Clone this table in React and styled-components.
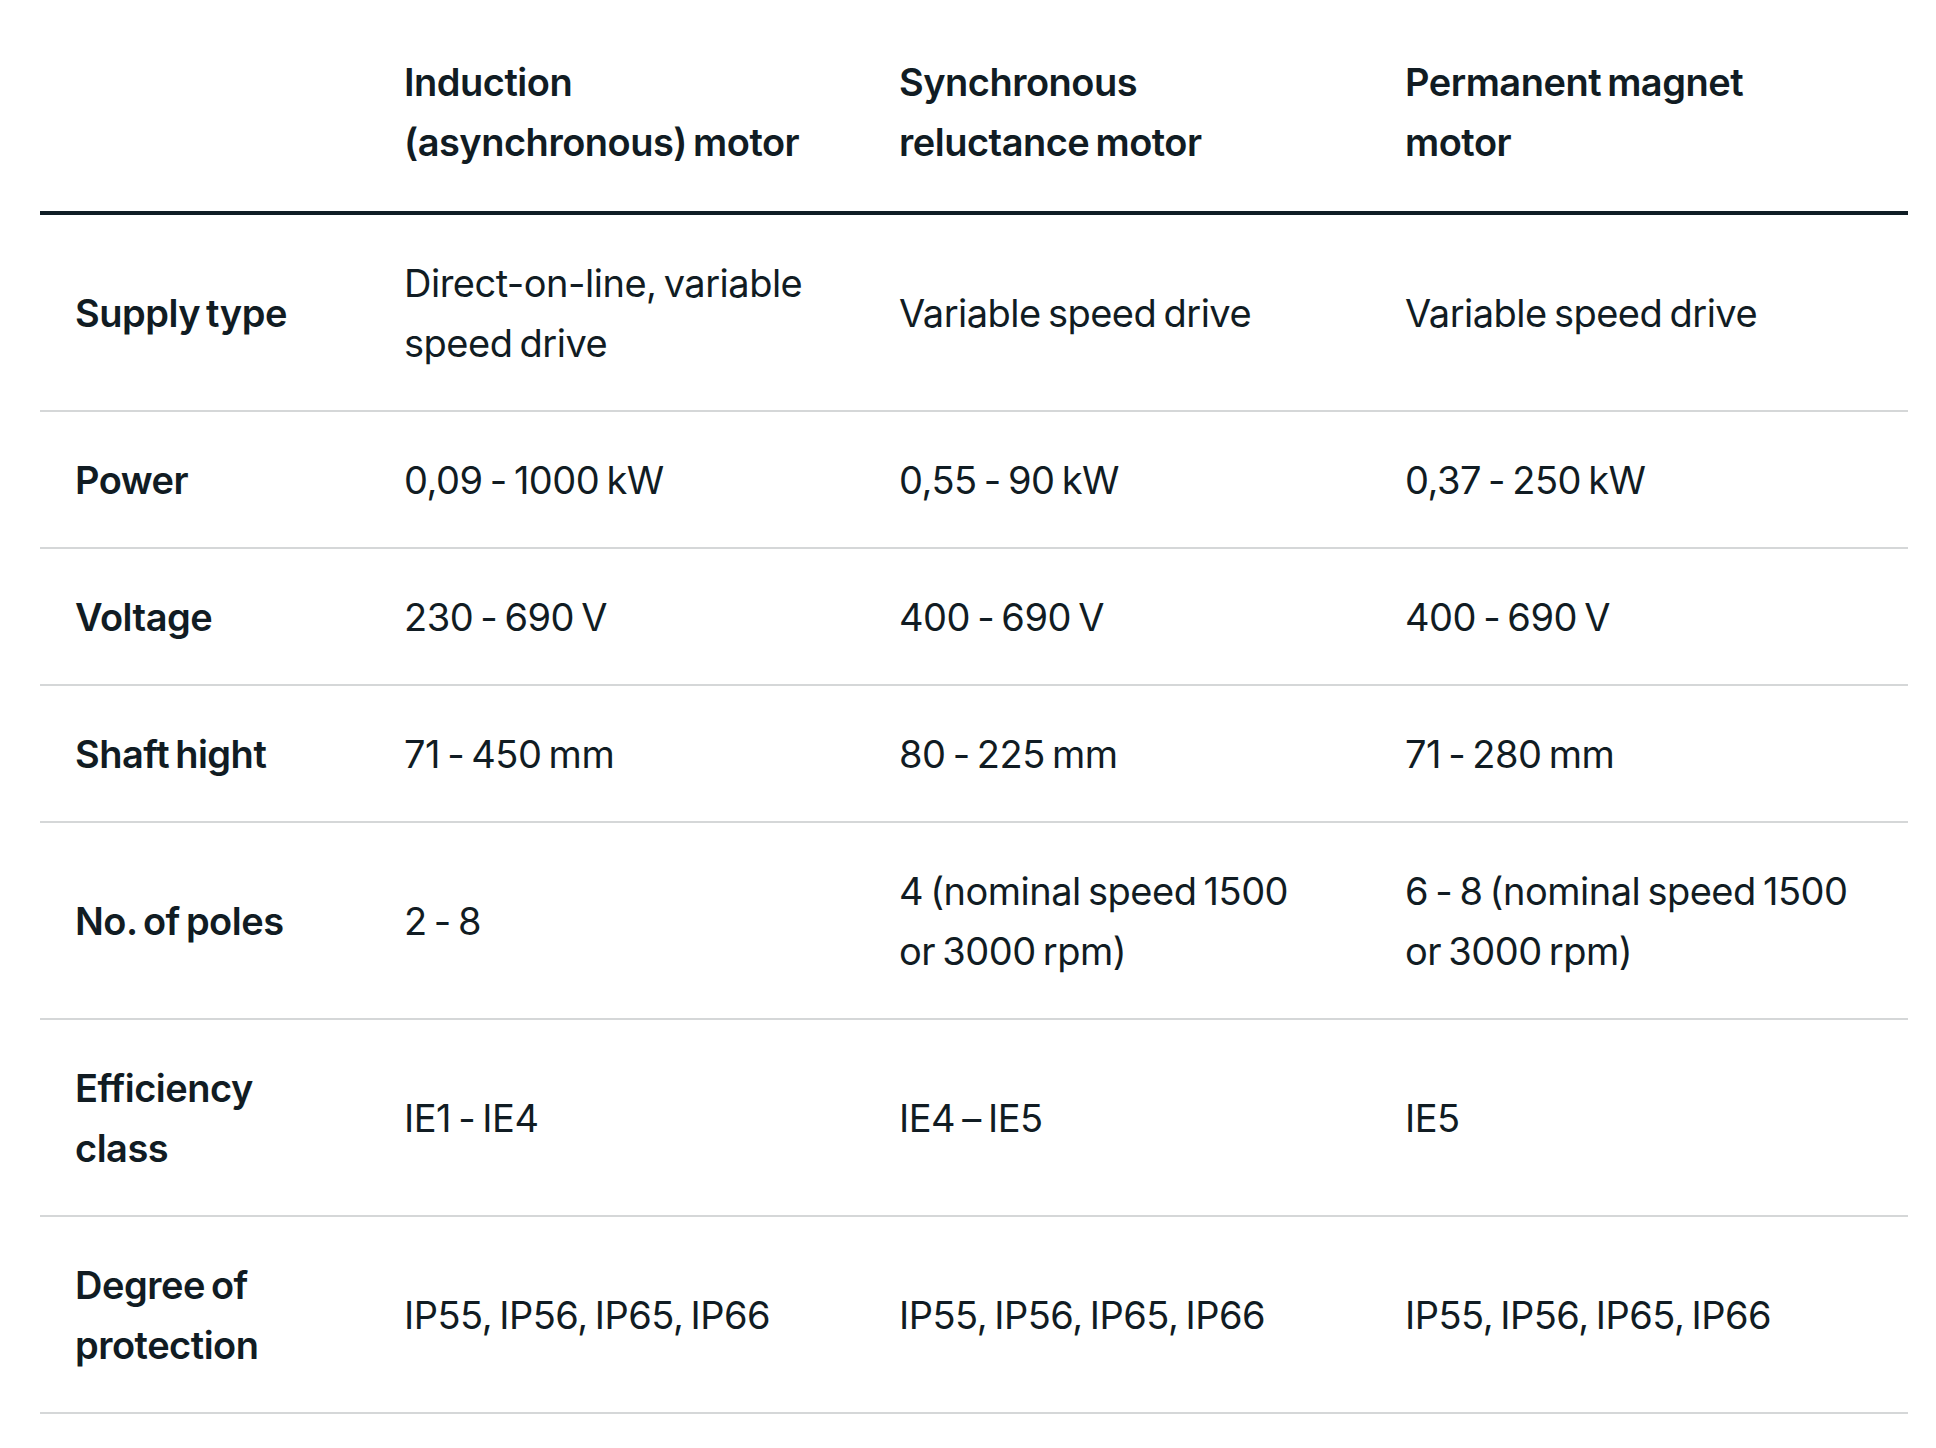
import React from "react";
import styled, { createGlobalStyle } from "styled-components";

const GlobalStyle = createGlobalStyle`
  html, body {
    margin: 0;
    padding: 0;
    background: #ffffff;
  }
  body {
    font-family: Inter, "Liberation Sans", Arial, sans-serif;
    color: #111c23;
  }
`;

const COLS = "329px 495px 506px 538px";

const Page = styled.main`
  padding: 0 28px 0 40px;
  width: 1868px;
`;

const Table = styled.div`
  display: flex;
  flex-direction: column;
  width: 1868px;
`;

const HeadRow = styled.div`
  display: grid;
  grid-template-columns: ${COLS};
  align-items: end;
  padding: 52px 0 39px;
  border-bottom: 4px solid #0f1d25;
`;

const Row = styled.div`
  display: grid;
  grid-template-columns: ${COLS};
  align-items: center;
  padding: 37.5px 0 37.5px;
  border-bottom: 2px solid #d5d7d8;
`;

const Cell = styled.div`
  padding: 0 50px 0 35px;
  font-size: 38px;
  line-height: 60px;
  font-weight: 400;
  letter-spacing: -0.5px;
  word-spacing: -3px;
  font-variant-numeric: proportional-nums;
  color: #111c23;
`;

const HeadCell = styled(Cell)`
  font-weight: 600;
  max-width: 420px;
`;

const LabelCell = styled(Cell)`
  font-weight: 600;
  max-width: 250px;
`;

const headers = [
  "Induction (asynchronous) motor",
  "Synchronous reluctance motor",
  "Permanent magnet motor",
];

const rows = [
  { label: "Supply type", values: ["Direct-on-line, variable speed drive", "Variable speed drive", "Variable speed drive"] },
  { label: "Power", values: ["0,09 - 1000 kW", "0,55 - 90 kW", "0,37 - 250 kW"] },
  { label: "Voltage", values: ["230 - 690 V", "400 - 690 V", "400 - 690 V"] },
  { label: "Shaft hight", values: ["71 - 450 mm", "80 - 225 mm", "71 - 280 mm"] },
  { label: "No. of poles", values: ["2 - 8", "4 (nominal speed 1500 or 3000 rpm)", "6 - 8 (nominal speed 1500 or 3000 rpm)"] },
  { label: "Efficiency class", values: ["IE1 - IE4", "IE4 \u2013 IE5", "IE5"] },
  { label: "Degree of protection", values: ["IP55, IP56, IP65, IP66", "IP55, IP56, IP65, IP66", "IP55, IP56, IP65, IP66"] },
];

export default function App() {
  return (
    <>
      <GlobalStyle />
      <Page>
        <Table>
          <HeadRow>
            <Cell />
            {headers.map((h) => (
              <HeadCell key={h}>{h}</HeadCell>
            ))}
          </HeadRow>
          {rows.map((r) => (
            <Row key={r.label}>
              <LabelCell>{r.label}</LabelCell>
              {r.values.map((v, i) => (
                <Cell key={i}>{v}</Cell>
              ))}
            </Row>
          ))}
        </Table>
      </Page>
    </>
  );
}
